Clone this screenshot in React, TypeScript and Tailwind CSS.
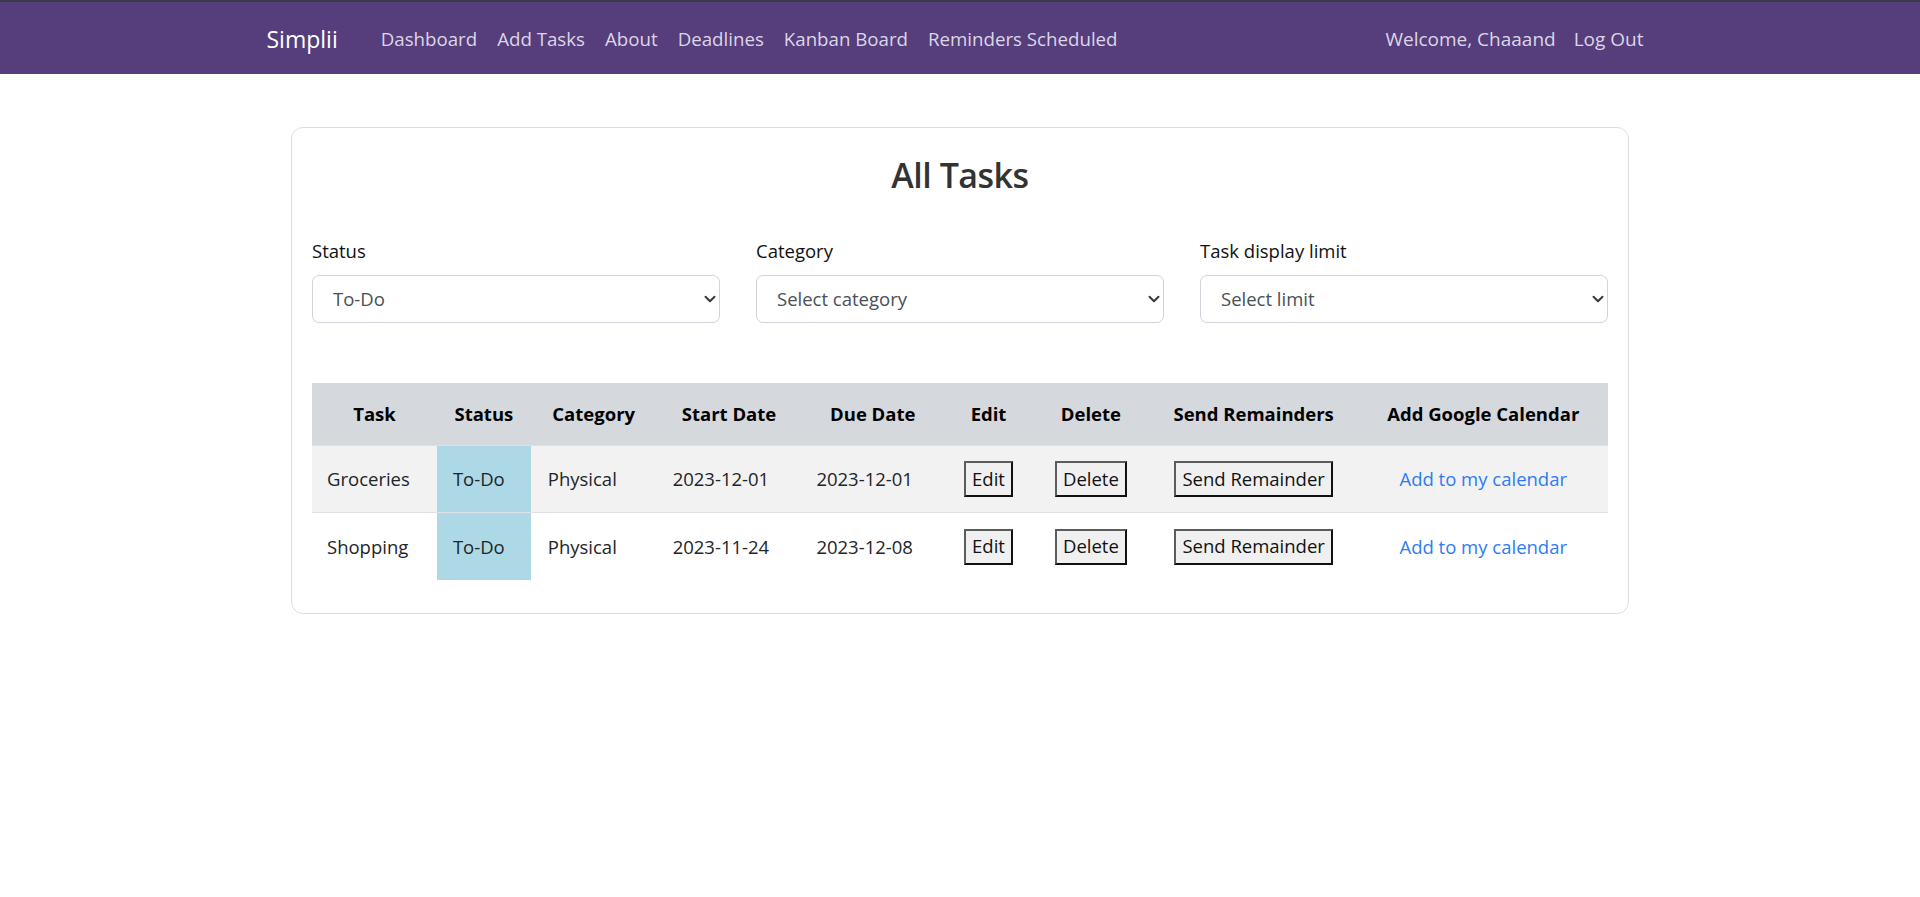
import { ChevronDown } from 'lucide-react'

const NAV_LINKS = ['Dashboard', 'Add Tasks', 'About', 'Deadlines', 'Kanban Board', 'Reminders Scheduled']

const FILTERS = [
  { label: 'Status', value: 'To-Do' },
  { label: 'Category', value: 'Select category' },
  { label: 'Task display limit', value: 'Select limit' },
]

const COLUMNS = [
  { title: 'Task', width: 'w-[125px]' },
  { title: 'Status', width: 'w-[94px]' },
  { title: 'Category', width: 'w-[126px]' },
  { title: 'Start Date', width: 'w-[145px]' },
  { title: 'Due Date', width: 'w-[143px]' },
  { title: 'Edit', width: 'w-[89px]' },
  { title: 'Delete', width: 'w-[116px]' },
  { title: 'Send Remainders', width: 'w-[210px]' },
  { title: 'Add Google Calendar', width: 'w-[250px]' },
]

const TASKS = [
  { id: 1, task: 'Groceries', status: 'To-Do', category: 'Physical', start: '2023-12-01', due: '2023-12-01' },
  { id: 2, task: 'Shopping', status: 'To-Do', category: 'Physical', start: '2023-11-24', due: '2023-12-08' },
]

function OldButton({ children }: { children: string }) {
  return (
    <button className="h-[36px] border-2 border-t-[#5c5c5c] border-l-[#5c5c5c] border-b-[#111] border-r-[#111] bg-[#f0f0f0] px-[6px] leading-none text-[#111]">
      {children}
    </button>
  )
}

export default function App() {
  return (
    <div className="min-h-screen bg-white text-[18.5px] text-[#212529] [font-family:'Open_Sans',sans-serif]">
      {/* Navbar */}
      <nav className="h-[74px] border-t-2 border-[#3a3a44] bg-[#563d7c]">
        <div className="mx-auto flex h-full w-[1425px] items-center px-[15px] pt-[2px]">
          <span className="mr-[33px] pl-[4px] text-[23px] text-white">Simplii</span>
          <div className="flex items-center text-[18.7px]">
            {NAV_LINKS.map((link) => (
              <a key={link} className="px-[10px] text-[#dcd6e6]">
                {link}
              </a>
            ))}
          </div>
          <div className="ml-auto flex items-center gap-[18px] pr-[14px] text-[19px]">
            <span className="text-[#dcd6e6]">Welcome, Chaaand</span>
            <a className="text-[#dcd6e6]">Log Out</a>
          </div>
        </div>
      </nav>

      {/* Card */}
      <div className="mx-auto mt-[53px] w-[1338px] rounded-[12px] border border-[#dedede] px-[20px] pb-[33px] pt-[27px]">
        <h2 className="text-center text-[34px] font-semibold leading-[1.2] tracking-[-0.5px] text-[#333]">All Tasks</h2>

        {/* Filters */}
        <div className="mt-[40px] grid grid-cols-3 gap-[36px]">
          {FILTERS.map((f) => (
            <div key={f.label}>
              <label className="mb-[9px] block leading-[30px] text-[#111]">{f.label}</label>
              <div className="flex h-[48px] items-center justify-between rounded-[7px] border border-[#ced4da] pl-[20px] pr-0 text-[#495057]">
                <span>{f.value}</span>
                <ChevronDown size={18} strokeWidth={2.6} className="text-[#343a40]" />
              </div>
            </div>
          ))}
        </div>

        {/* Table */}
        <table className="mt-[60px] w-full border-collapse">
          <thead>
            <tr className="bg-[#d5d8dc]">
              {COLUMNS.map((c) => (
                <th key={c.title} className={`${c.width} h-[63px] text-center font-bold text-black`}>
                  {c.title}
                </th>
              ))}
            </tr>
          </thead>
          <tbody>
            {TASKS.map((t, i) => (
              <tr key={t.id} className={`${i === 0 ? 'bg-[#f2f2f2]' : 'bg-white'} border-t border-[#dee2e6]`}>
                <td className="h-[67px] pl-[15px] text-left">{t.task}</td>
                <td className="bg-[#add8e6] pl-[16px] text-left">{t.status}</td>
                <td className="pl-[17px] text-left">{t.category}</td>
                <td className="pl-[16px] text-left">{t.start}</td>
                <td className="pl-[15px] text-left">{t.due}</td>
                <td className="text-center">
                  <OldButton>Edit</OldButton>
                </td>
                <td className="text-center">
                  <OldButton>Delete</OldButton>
                </td>
                <td className="text-center">
                  <OldButton>Send Remainder</OldButton>
                </td>
                <td className="text-center">
                  <a className="text-[#2d7cf6]">Add to my calendar</a>
                </td>
              </tr>
            ))}
          </tbody>
        </table>
      </div>
    </div>
  )
}
